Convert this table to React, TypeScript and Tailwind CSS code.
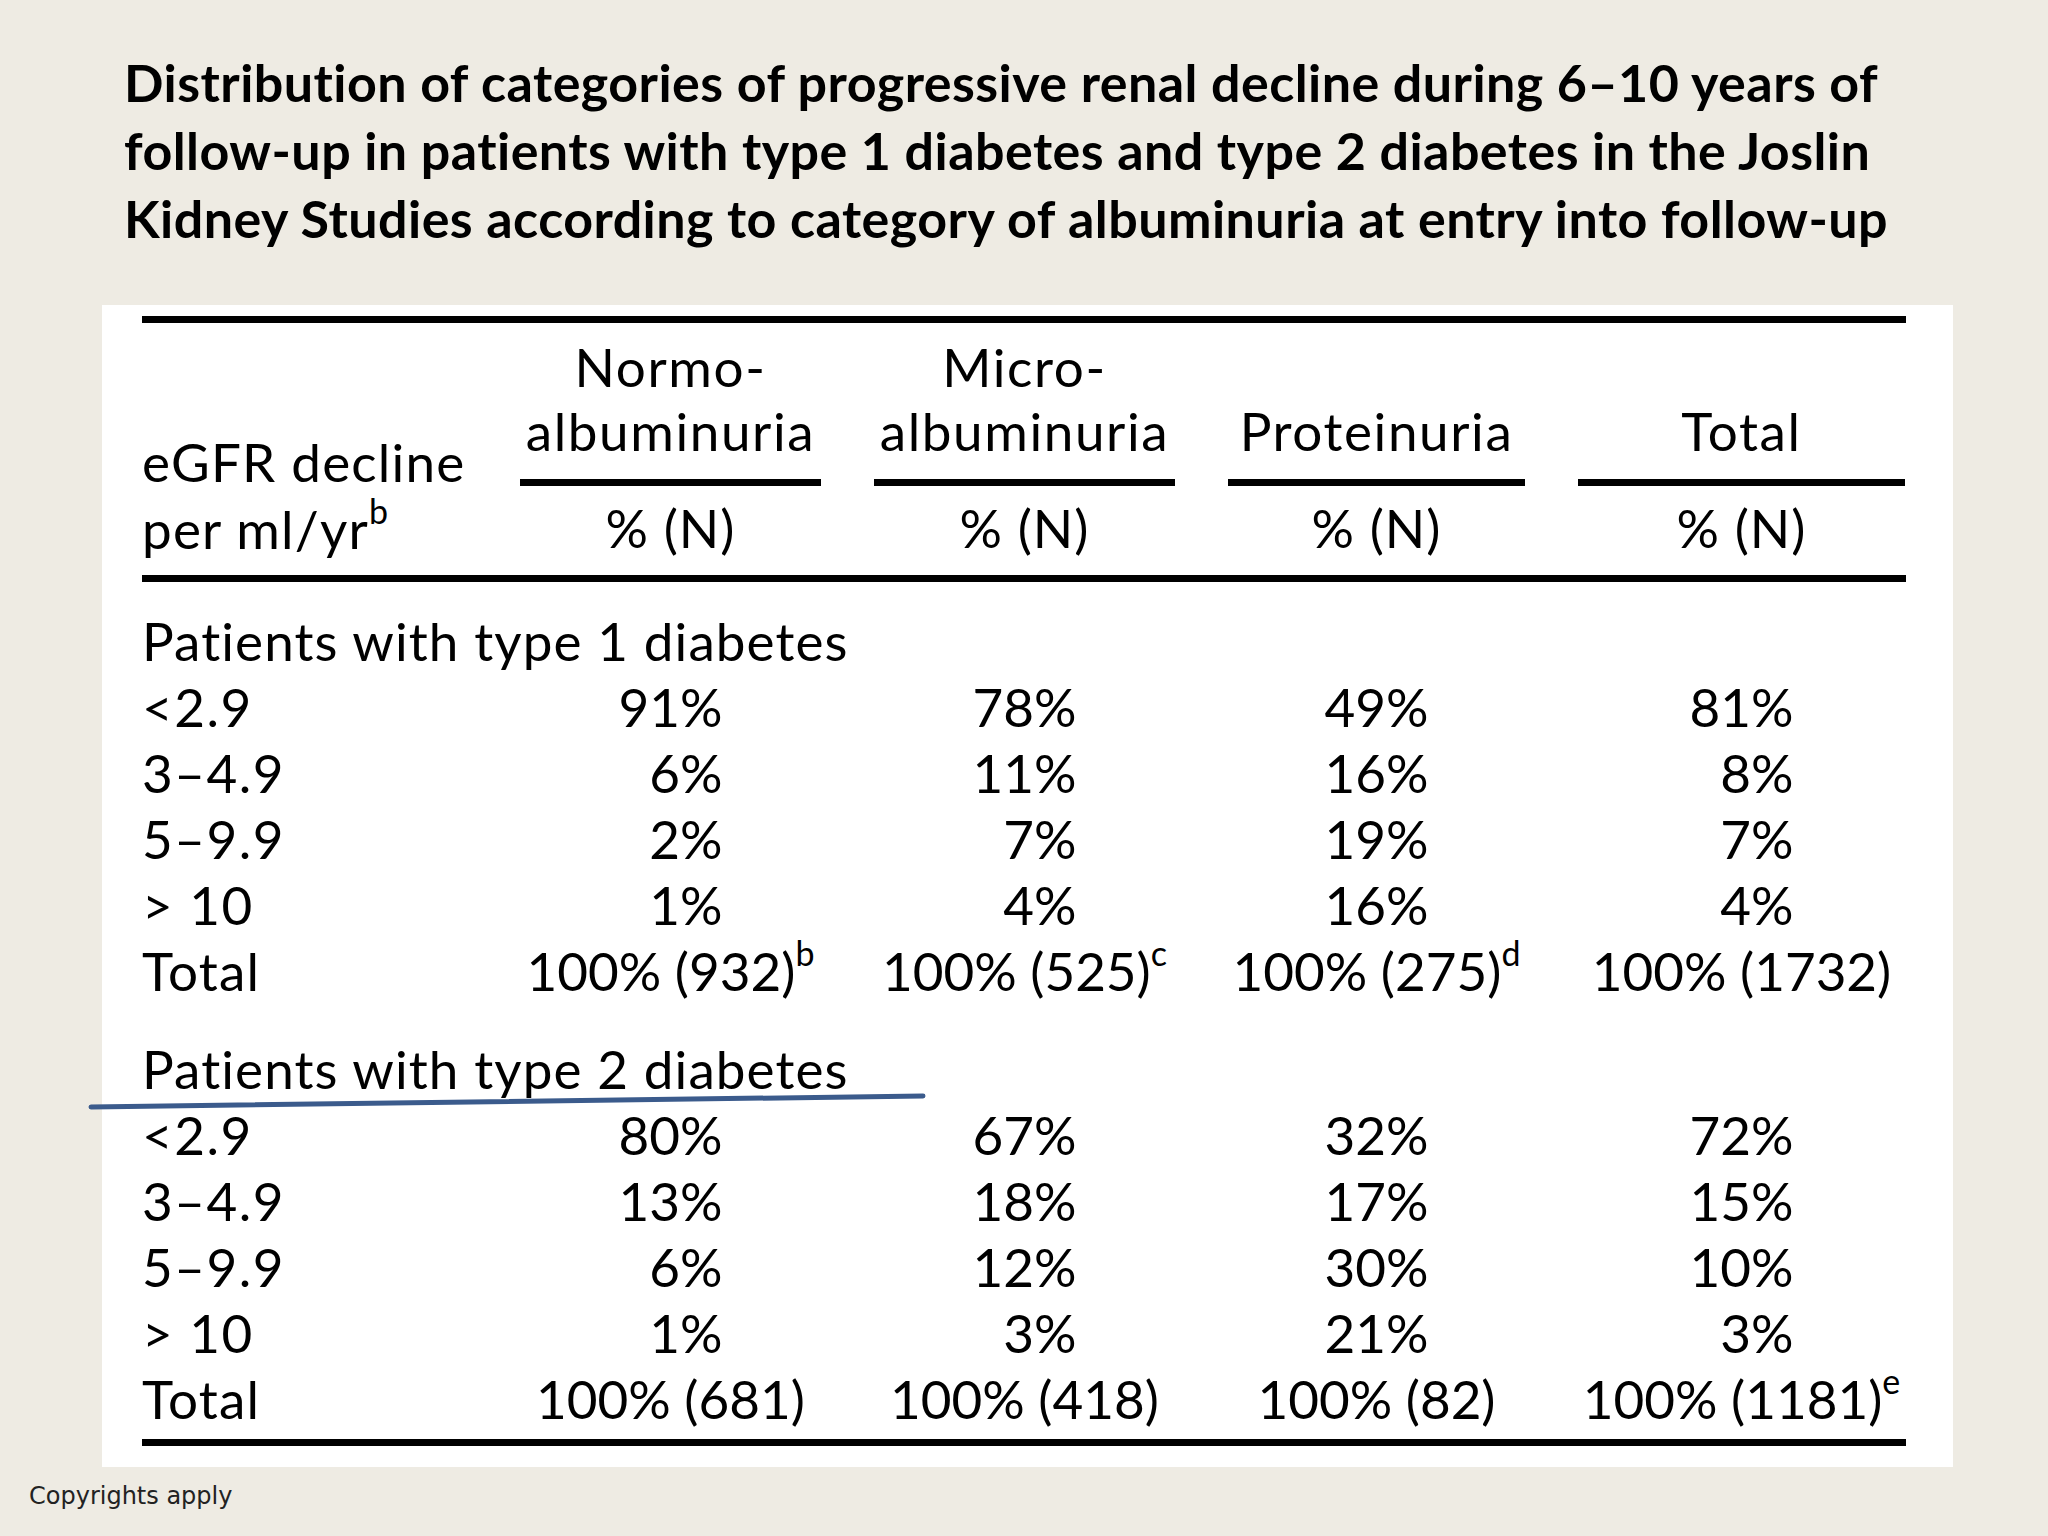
// Slide: distribution of renal decline categories by albuminuria, as a
// journal-style table on a white card over a beige slide background.

type Total = { text: string; note?: string }
type Section = { title: string; rows: string[][]; totals: Total[] }

const COLUMNS = [['Normo-', 'albuminuria'], ['Micro-', 'albuminuria'], ['Proteinuria'], ['Total']]

const SECTIONS: Section[] = [
  {
    title: 'Patients with type 1 diabetes',
    rows: [
      ['<2.9', '91%', '78%', '49%', '81%'],
      ['3–4.9', '6%', '11%', '16%', '8%'],
      ['5–9.9', '2%', '7%', '19%', '7%'],
      ['> 10', '1%', '4%', '16%', '4%'],
    ],
    totals: [
      { text: '100% (932)', note: 'b' },
      { text: '100% (525)', note: 'c' },
      { text: '100% (275)', note: 'd' },
      { text: '100% (1732)' },
    ],
  },
  {
    title: 'Patients with type 2 diabetes',
    rows: [
      ['<2.9', '80%', '67%', '32%', '72%'],
      ['3–4.9', '13%', '18%', '17%', '15%'],
      ['5–9.9', '6%', '12%', '30%', '10%'],
      ['> 10', '1%', '3%', '21%', '3%'],
    ],
    totals: [
      { text: '100% (681)' },
      { text: '100% (418)' },
      { text: '100% (82)' },
      { text: '100% (1181)', note: 'e' },
    ],
  },
]

const GRID = 'grid grid-cols-[325px_301px_301px_297px_327px] gap-x-[53px]'

function Sup({ children }: { children: string }) {
  return <span className="relative bottom-[25px] text-[34px] leading-none tracking-normal">{children}</span>
}

// right-aligns a value against the width of a two-digit percentage
function Pct({ value }: { value: string }) {
  return (
    <span className="inline-grid text-right">
      <span className="invisible col-start-1 row-start-1">00%</span>
      <span className="col-start-1 row-start-1">{value}</span>
    </span>
  )
}

function Rule() {
  return <div className="h-[7px] bg-black" />
}

function SectionRows({ section }: { section: Section }) {
  return (
    <div>
      <div className="h-[66px] tracking-[1.1px]">{section.title}</div>
      {section.rows.map((r) => (
        <div key={r[0]} className={`${GRID} h-[66px]`}>
          <div className="tracking-[1.5px]">{r[0]}</div>
          {r.slice(1).map((v, i) => (
            <div key={i} className="text-center">
              <Pct value={v} />
            </div>
          ))}
        </div>
      ))}
      <div className={`${GRID} h-[66px]`}>
        <div className="tracking-[1.2px]">Total</div>
        {section.totals.map((t, i) => (
          <div key={i} className="text-center whitespace-nowrap">
            {t.text}
            {t.note && <Sup>{t.note}</Sup>}
          </div>
        ))}
      </div>
    </div>
  )
}

export default function App() {
  return (
    <div className="relative h-[1536px] w-[2048px] overflow-hidden bg-[#eeebe3] font-['Lato',sans-serif] text-black">
      <h1 className="whitespace-nowrap pl-[124px] pt-[48px] text-[52px] font-bold leading-[68px] tracking-[0.45px]">
        Distribution of categories of progressive renal decline during 6–10 years of
        <br />
        follow-up in patients with type 1 diabetes and type 2 diabetes in the Joslin
        <br />
        Kidney Studies according to category of albuminuria at entry into follow-up
      </h1>

      <div className="ml-[102px] mt-[53px] h-[1162px] w-[1851px] bg-white pl-[40px] pt-[11px]">
        <div className="w-[1764px] text-[53px] leading-[66px]">
          <Rule />
          <div className={`${GRID} h-[252px]`}>
            <div className="flex flex-col justify-end pb-[13px] leading-[67px] tracking-[1.2px]">
              <div>eGFR decline</div>
              <div>
                per ml/yr<Sup>b</Sup>
              </div>
            </div>
            {COLUMNS.map((lines) => (
              <div key={lines.join('')} className="flex flex-col">
                <div className="flex h-[156px] flex-col items-center justify-end pb-[16px] leading-[64px] tracking-[1.6px]">
                  {lines.map((l) => (
                    <div key={l}>{l}</div>
                  ))}
                </div>
                <Rule />
                <div className="pt-[10px] text-center leading-[64px] tracking-[1px]">% (N)</div>
              </div>
            ))}
          </div>
          <Rule />

          <div className="pt-[26px]">
            <SectionRows section={SECTIONS[0]} />
          </div>
          <div className="pt-[32px]">
            <SectionRows section={SECTIONS[1]} />
          </div>
          <div className="pt-[7px]">
            <Rule />
          </div>
        </div>
      </div>

      <p className="mt-[14px] pl-[29px] font-['DejaVu_Sans',sans-serif] text-[24px] leading-[30px] text-[#222]">
        Copyrights apply
      </p>

      {/* hand-drawn underline annotation */}
      <svg className="absolute left-[86px] top-[1090px]" width="842" height="22" viewBox="0 0 842 22">
        <line x1="5" y1="17" x2="837" y2="6" stroke="#3b5b8c" strokeWidth="5" strokeLinecap="round" />
      </svg>
    </div>
  )
}
